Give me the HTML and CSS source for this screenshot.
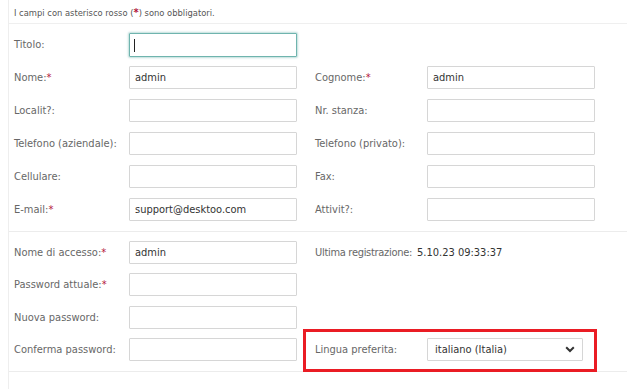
FILE: index.html
```html
<!DOCTYPE html>
<html lang="it">
<head>
<meta charset="utf-8">
<title>Profilo utente</title>
<link rel="stylesheet" href="styles.css">
</head>
<body>
<div class="panel">
  <div class="note">I campi con asterisco rosso (<span class="req big">*</span>) sono obbligatori.</div>

  <div class="section">
    <label class="lbl">Titolo:</label>
    <span class="focus-wrap"><input class="field focused" type="text" value=""><span class="caret"></span></span>
    <span class="blank"></span><span></span>

    <label class="lbl">Nome:<span class="req">*</span></label>
    <input class="field" type="text" value="admin">
    <label class="lbl right">Cognome:<span class="req">*</span></label>
    <input class="field" type="text" value="admin">

    <label class="lbl">Localit?:</label>
    <input class="field" type="text" value="">
    <label class="lbl right">Nr. stanza:</label>
    <input class="field" type="text" value="">

    <label class="lbl">Telefono (aziendale):</label>
    <input class="field" type="text" value="">
    <label class="lbl right">Telefono (privato):</label>
    <input class="field" type="text" value="">

    <label class="lbl">Cellulare:</label>
    <input class="field" type="text" value="">
    <label class="lbl right">Fax:</label>
    <input class="field" type="text" value="">

    <label class="lbl">E-mail:<span class="req">*</span></label>
    <input class="field" type="text" value="support@desktoo.com">
    <label class="lbl right">Attivit?:</label>
    <input class="field" type="text" value="">
  </div>

  <div class="section section2">
    <label class="lbl">Nome di accesso:<span class="req">*</span></label>
    <input class="field" type="text" value="admin">
    <div class="info">
      <span class="lbl info-lbl">Ultima registrazione:</span>
      <span class="value">5.10.23 09:33:37</span>
    </div>

    <label class="lbl">Password attuale:<span class="req">*</span></label>
    <input class="field" type="password" value="">
    <span></span><span></span>

    <label class="lbl">Nuova password:</label>
    <input class="field" type="password" value="">
    <span></span><span></span>

    <label class="lbl">Conferma password:</label>
    <input class="field" type="password" value="">
    <label class="lbl right">Lingua preferita:</label>
    <div class="select">
      <span>italiano (Italia)</span>
      <svg class="chev" width="10" height="7" viewBox="0 0 10 7"><path d="M1.2 1.3 L5 5 L8.8 1.3" fill="none" stroke="#333" stroke-width="2"/></svg>
    </div>
    <div class="highlight"></div>
  </div>
</div>
</body>
</html>
```

FILE: styles.css
```css
html, body {
  margin: 0;
  padding: 0;
  background: #fff;
}
body {
  font-family: "DejaVu Sans Condensed", "DejaVu Sans", sans-serif;
  font-size: 11px;
  color: #666;
  width: 627px;
  height: 389px;
  overflow: hidden;
}
.panel {
  margin-left: 8px;
  border-left: 1px solid #eeeeee;
  height: 389px;
}
.note {
  height: 24px;
  box-sizing: border-box;
  padding: 7px 0 0 5px;
  font-size: 9.3px;
  color: #555;
  border-bottom: 1px solid #efefef;
}
.req {
  color: #b3153a;
}
.req.big {
  font-size: 11px;
  font-weight: bold;
  line-height: 8px;
}
.section {
  display: grid;
  grid-template-columns: 115px 168px 130px 168px;
  row-gap: 10px;
  align-items: center;
  padding: 9px 0 10px 5px;
  border-bottom: 1px solid #ececec;
}
.right {
  margin-left: 18px;
}
.section2 {
  position: relative;
  row-gap: 9.33px;
}
.info {
  grid-column: span 2;
  margin-left: 18px;
  display: flex;
  gap: 5px;
}
.info-lbl {
  letter-spacing: -0.3px;
}
.lbl {
  white-space: nowrap;
  color: #676767;
}
.field {
  display: block;
  box-sizing: border-box;
  width: 168px;
  height: 23px;
  margin: 0;
  padding: 0 5px;
  border: 1px solid #d6d6d6;
  border-radius: 1px;
  background: #fff;
  font-family: inherit;
  font-size: 11px;
  color: #333;
  outline: none;
}
.focus-wrap {
  position: relative;
  display: block;
  width: 168px;
  height: 23px;
}
.field.focused {
  border-color: #6fb4ae;
  box-shadow: 0 0 2px 1px rgba(111, 180, 174, 0.45);
  height: 24px;
}
.caret {
  position: absolute;
  left: 5px;
  top: 6px;
  width: 1px;
  height: 13px;
  background: #222;
}
.value {
  color: #333;
}
.select {
  box-sizing: border-box;
  width: 156px;
  height: 23px;
  border: 1px solid #d6d6d6;
  border-radius: 1px;
  display: flex;
  align-items: center;
  justify-content: space-between;
  padding: 0 7px 0 7px;
  color: #333;
  font-size: 11px;
}
.chev {
  display: block;
}
.highlight {
  position: absolute;
  left: 294px;
  top: 97px;
  width: 294px;
  height: 43px;
  box-sizing: border-box;
  border: 3px solid #ea1c24;
  pointer-events: none;
}
```
